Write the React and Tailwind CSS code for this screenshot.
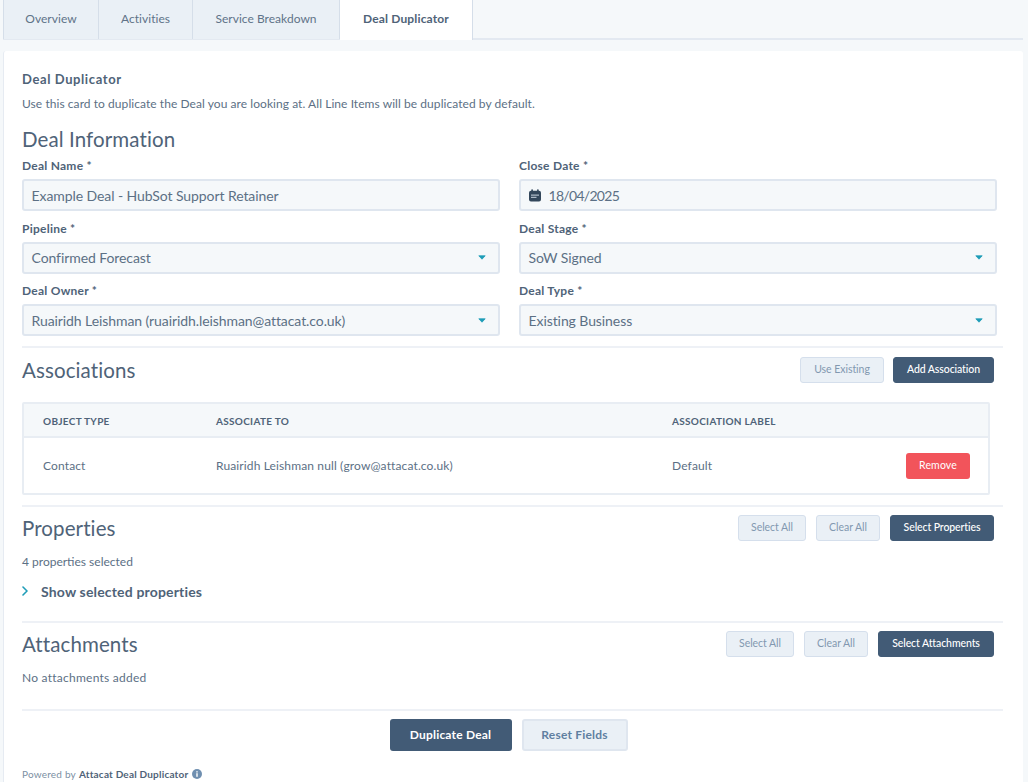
const Caret = () => (
  <svg width="8" height="5" viewBox="0 0 8 5" className="shrink-0">
    <path d="M0.8 0.8 H7.2 L4 4.2 Z" fill="#1f9db8" stroke="#1f9db8" strokeWidth="0.8" strokeLinejoin="round" />
  </svg>
);

const CalendarIcon = () => (
  <svg width="12" height="13" viewBox="0 0 12 13" className="shrink-0">
    <rect x="2.3" y="0.3" width="1.6" height="3" rx="0.7" fill="#33475b" />
    <rect x="8.1" y="0.3" width="1.6" height="3" rx="0.7" fill="#33475b" />
    <path d="M2 1.8 H10 A2 2 0 0 1 12 3.8 V10.5 A2 2 0 0 1 10 12.5 H2 A2 2 0 0 1 0 10.5 V3.8 A2 2 0 0 1 2 1.8 Z" fill="#33475b" />
    <rect x="2" y="5.6" width="8" height="1" fill="#cbd6e2" />
    <rect x="2" y="7.8" width="5.5" height="1" fill="#cbd6e2" />
  </svg>
);

const Label = ({ children }) => (
  <div className="h-[14px] text-[12px] leading-[14px] font-bold tracking-[0.25px] text-[#4f6378]">{children}</div>
);

const Field = ({ label, value, select, date }) => (
  <div>
    <Label>{label}</Label>
    <div className="mt-[6px] flex h-[32px] items-center justify-between rounded-[3px] border-2 border-[#dfe6ef] bg-[#f5f8fa] pl-[7.5px] pr-[12px] text-[14px] tracking-[-0.08px] text-[#5c7085]">
      <span className="flex items-center gap-[8px]">
        {date && <CalendarIcon />}
        <span className={date ? "tracking-[-0.7px]" : ""}>{value}</span>
      </span>
      {select && <Caret />}
    </div>
  </div>
);

const Btn = ({ children, w, dark }) => (
  <button
    className={
      "flex h-[26px] items-center justify-center rounded-[3px] border text-[10.5px] " +
      w + " " +
      (dark
        ? "border-[#425b76] bg-[#425b76] font-medium tracking-[-0.1px] text-white"
        : "border-[#d5dfec] bg-[#eaf0f6] tracking-[-0.05px] text-[#8298b0]")
    }
  >
    {children}
  </button>
);

const Heading = ({ children }) => (
  <h2 className="text-[20.5px] leading-[26px] tracking-[0.1px] text-[#4f6378]">{children}</h2>
);

const Tab = ({ children, w, first }) => (
  <div className={"flex h-[39px] items-center justify-center border-r border-[#d5dee9] bg-[#eaf0f6] pb-[2px] text-[12px] tracking-[0.03px] text-[#5f7388] " + (first ? "border-l " : "") + w}>
    {children}
  </div>
);

export default function App() {
  return (
    <div
      className="h-[782px] w-[1028px] overflow-hidden bg-[#f5f8fa] pl-[3px] pr-[5px]"
      style={{ fontFamily: '"Lato", "Noto Sans", sans-serif' }}
    >
      <div className="flex h-[40px] border-b-2 border-[#e3e9f1]">
        <Tab w="w-[96px]" first>Overview</Tab>
        <Tab w="w-[94px]">Activities</Tab>
        <Tab w="w-[147px]">Service Breakdown</Tab>
        <div className="-mb-[2px] flex h-[40px] w-[133px] items-center justify-center border-r border-[#d5dee9] bg-white pb-[2px] text-[12px] font-bold tracking-[0.15px] text-[#4f6378]">
          Deal Duplicator
        </div>
      </div>

      <main className="mt-[11px] h-[740px] rounded-t-[3px] border-l border-[#e6ebf2] bg-white pl-[18px] pr-[20px] text-[#4f6378]">
        <h1 className="pt-[20px] text-[13px] leading-[16px] font-bold tracking-[0.6px]">Deal Duplicator</h1>
        <p className="mt-[9px] text-[12px] leading-[16px] tracking-[0.06px] text-[#5c7085]">
          Use this card to duplicate the Deal you are looking at. All Line Items will be duplicated by default.
        </p>
        <div className="mt-[14px]">
          <Heading>Deal Information</Heading>
        </div>

        <div className="mt-[7px] grid w-[975px] grid-cols-2 gap-x-[19px] gap-y-[10.5px]">
          <Field label="Deal Name *" value="Example Deal - HubSot Support Retainer" />
          <Field label="Close Date *" value="18/04/2025" date />
          <Field label="Pipeline *" value="Confirmed Forecast" select />
          <Field label="Deal Stage *" value="SoW Signed" select />
          <Field label="Deal Owner *" value="Ruairidh Leishman (ruairidh.leishman@attacat.co.uk)" select />
          <Field label="Deal Type *" value="Existing Business" select />
        </div>

        <section className="mt-[10px] border-t-2 border-[#eef1f6] pt-[9px]">
          <div className="flex items-center justify-between pr-[9px]">
            <Heading>Associations</Heading>
            <div className="flex gap-[9px]">
              <Btn w="w-[84px]">Use Existing</Btn>
              <Btn w="w-[101px]" dark>Add Association</Btn>
            </div>
          </div>

          <div className="mt-[19px] h-[93px] w-[968px] rounded-[2px] border-2 border-[#e8edf3]">
            <div className="grid h-[34px] grid-cols-[173px_456px_1fr] items-center border-b-2 border-[#e8edf3] bg-[#f5f8fa] px-[19px] pt-[2px] text-[10px] font-bold tracking-[0.3px] text-[#4f6378]">
              <span>OBJECT TYPE</span>
              <span>ASSOCIATE TO</span>
              <span>ASSOCIATION LABEL</span>
            </div>
            <div className="grid h-[55px] grid-cols-[173px_456px_1fr] items-center pl-[19px] pr-[18px] text-[12px] tracking-[0.13px] text-[#5c7085]">
              <span>Contact</span>
              <span>Ruairidh Leishman null (grow@attacat.co.uk)</span>
              <span className="flex items-center justify-between">
                Default
                <button className="flex h-[26px] w-[64px] items-center justify-center rounded-[3px] bg-[#f2545b] text-[10.5px] text-white">
                  Remove
                </button>
              </span>
            </div>
          </div>
        </section>

        <section className="mt-[10px] h-[116px] border-t-2 border-[#eef1f6] pt-[8px]">
          <div className="flex items-center justify-between pr-[9px]">
            <Heading>Properties</Heading>
            <div className="flex gap-[10px]">
              <Btn w="w-[68px]">Select All</Btn>
              <Btn w="w-[64px]">Clear All</Btn>
              <Btn w="w-[104px]" dark>Select Properties</Btn>
            </div>
          </div>
          <p className="mt-[13px] text-[12px] leading-[16px] text-[#5c7085]">4 properties selected</p>
          <div className="mt-[13px] flex items-center">
            <svg width="6" height="10" viewBox="0 0 6 10" className="mb-[2px] shrink-0">
              <path d="M1 1 L5 5 L1 9" fill="none" stroke="#1f9db8" strokeWidth="1.6" strokeLinecap="round" strokeLinejoin="round" />
            </svg>
            <span className="ml-[13px] text-[14px] leading-[18px] font-bold tracking-[0.17px]">Show selected properties</span>
          </div>
        </section>

        <section className="h-[88px] border-t-2 border-[#eef1f6] pt-[8px]">
          <div className="flex items-center justify-between pr-[9px]">
            <Heading>Attachments</Heading>
            <div className="flex gap-[10px]">
              <Btn w="w-[68px]">Select All</Btn>
              <Btn w="w-[64px]">Clear All</Btn>
              <Btn w="w-[116px]" dark>Select Attachments</Btn>
            </div>
          </div>
          <p className="mt-[13px] text-[12px] leading-[16px] tracking-[0.25px] text-[#5c7085]">No attachments added</p>
        </section>

        <div className="flex justify-center gap-[10px] border-t-2 border-[#eef1f6] pt-[8px] pr-[8px]">
          <button className="flex h-[32px] w-[122px] items-center justify-center rounded-[3px] bg-[#425b76] text-[12px] font-bold tracking-[0.2px] text-white">
            Duplicate Deal
          </button>
          <button className="flex h-[32px] w-[106px] items-center justify-center rounded-[3px] border-2 border-[#dfe6ef] bg-[#eaf0f6] text-[12px] font-bold tracking-[0.2px] text-[#5f7fa1]">
            Reset Fields
          </button>
        </div>

        <footer className="mt-[16px] flex items-center text-[10px] leading-[14px] tracking-[0.2px] text-[#7c8fa3]">
          Powered by
          <span className="ml-[3px] font-bold text-[#4f6378]">Attacat Deal Duplicator</span>
          <svg width="10" height="10" viewBox="0 0 10 10" className="ml-[4px]">
            <circle cx="5" cy="5" r="5" fill="#6f8fb0" />
            <rect x="4.3" y="4.2" width="1.4" height="3.6" fill="#fff" />
            <rect x="4.3" y="2.2" width="1.4" height="1.3" fill="#fff" />
          </svg>
        </footer>
      </main>
    </div>
  );
}
